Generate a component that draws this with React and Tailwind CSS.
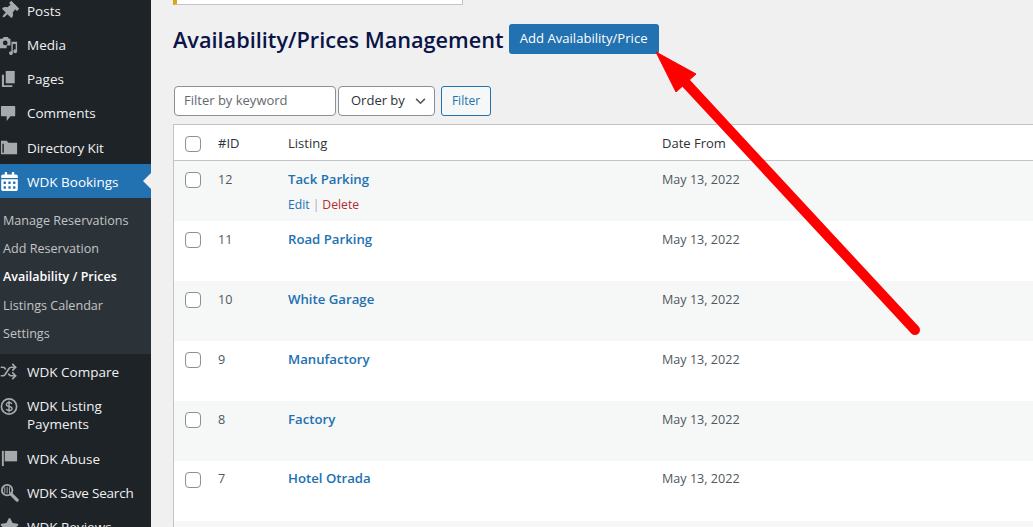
import React from "react";
import { Shuffle } from "lucide-react";
import { FaCalendarAlt, FaStar, FaThumbtack } from "react-icons/fa";

const Pin = () => <FaThumbtack className="w-[18px] h-[18px] rotate-45" />;
const Media = () => (
  <svg viewBox="0 0 20 20" className="w-[19px] h-[19px] fill-current">
    <path fillRule="evenodd" d="M0 3h2.500L4 1h4l1.500 2H11v7H7v3H0V3zm5.500 1.800a2.500 2.500 0 1 0 0 5 2.500 2.500 0 0 0 0-5z" />
    <path d="M12 6h6v10a2 2 0 1 1-1.500-1.900V8.500h-3V18a2 2 0 1 1-1.500-1.900V6z" />
  </svg>
);
const Pages = () => (
  <svg viewBox="0 0 20 20" className="w-[19px] h-[19px] fill-current">
    <path d="M6 1h9.500v13H6z" />
    <path d="M2 5h2.200v11H13v2H2z" />
  </svg>
);
const Comment = () => (
  <svg viewBox="0 0 20 20" className="w-[19px] h-[19px] fill-current">
    <path d="M2 2h13a1 1 0 0 1 1 1v9a1 1 0 0 1-1 1h-4l-4 5v-5H2a1 1 0 0 1-1-1V3a1 1 0 0 1 1-1z" />
  </svg>
);
const Folder = () => (
  <svg viewBox="0 0 20 20" className="w-[19px] h-[19px] fill-current mt-[1px]">
    <path d="M1 3h6l2 2h9v12H1zM2.500 6v9.500H4V6z" fillRule="evenodd" />
  </svg>
);
const Dollar = () => (
  <svg viewBox="0 0 20 20" className="w-[19px] h-[19px] -mt-[4px]">
    <circle cx="9.500" cy="10" r="8" fill="none" stroke="currentColor" strokeWidth="1.800" />
    <path d="M12.500 7.200c-.6-1-1.700-1.400-3-1.400-1.600 0-2.800.8-2.800 2.100 0 2.900 6 1.400 6 4.200 0 1.300-1.300 2.100-3 2.100-1.400 0-2.600-.5-3.200-1.600M9.500 4v12" fill="none" stroke="currentColor" strokeWidth="1.500" />
  </svg>
);
const Flag = () => (
  <svg viewBox="0 0 20 20" className="w-[19px] h-[19px] fill-current">
    <path d="M2 2h2v16H2z" />
    <path d="M5 2h13v11H5z" />
  </svg>
);
const SaveSearch = () => (
  <svg viewBox="0 0 20 20" className="w-[19px] h-[19px]">
    <circle cx="7.500" cy="7.500" r="5.500" fill="none" stroke="currentColor" strokeWidth="2" />
    <path d="M11.500 11.500 18 18" stroke="currentColor" strokeWidth="3.500" strokeLinecap="round" />
    <path d="M5 4.500v6M7.500 4v7M10 4.500v6" stroke="currentColor" strokeWidth="1" />
  </svg>
);

function Item({ icon, children, tall, shift }) {
  return (
    <div className={`flex text-[#f0f0f1] ${tall ? "pt-[9px] h-[53px]" : "items-center h-[34px]"}`}>
      <span className={`w-[27px] shrink-0 flex justify-start text-[#a7aaad] ${tall ? "pt-[4px]" : ""}`}>{icon}</span>
      <span className={`${tall ? "leading-[18px] w-[90px]" : ""} ${shift ? "pt-[2px]" : ""}`}>{children}</span>
    </div>
  );
}

const sub = [
  ["Manage Reservations", false],
  ["Add Reservation", false],
  ["Availability / Prices", true],
  ["Listings Calendar", false],
  ["Settings", false],
];

const rows = [
  ["12", "Tack Parking"],
  ["11", "Road Parking"],
  ["10", "White Garage"],
  ["9", "Manufactory"],
  ["8", "Factory"],
  ["7", "Hotel Otrada"],
];

function Check() {
  return <span className="block w-[16px] h-[16px] bg-white border border-[#8c8f94] rounded-[4px]" />;
}

export default function App() {
  return (
    <div className="relative flex h-[527px] w-full overflow-hidden bg-[#f0f0f1] text-[13px] font-['Open_Sans',sans-serif]">
      <aside className="w-[151px] shrink-0 bg-[#1d2327] text-[13.500px] overflow-hidden">
        <div className="-mt-[6px]">
          <Item icon={<Pin />}>Posts</Item>
          <Item icon={<Media />}>Media</Item>
          <Item icon={<Pages />}>Pages</Item>
          <Item icon={<Comment />}>Comments</Item>
          <Item shift icon={<Folder />}><span className="tracking-[-0.1px]">Directory Kit</span></Item>
        </div>
        <div className="relative flex items-center h-[34px] bg-[#2271b1] text-white">
          <span className="w-[27px] shrink-0 flex"><FaCalendarAlt className="w-[17px] h-[19px] ml-[1px]" /></span>
          <span className="pt-[2px]">WDK Bookings</span>
          <span className="absolute right-0 top-[9px] border-y-[8px] border-y-transparent border-r-[8px] border-r-[#f0f0f1]" />
        </div>
        <div className="bg-[#2c3338] h-[156px] pt-[9px] text-[12.600px] text-[#c3c4c7]">
          {sub.map(([t, active]) => (
            <div key={t} className={`h-[28.300px] flex items-center pl-[3px] ${active ? "text-white font-semibold text-[12.500px]" : ""}`}>{t}</div>
          ))}
        </div>
        <Item icon={<Shuffle className="w-[17px] h-[17px]" strokeWidth={2.400} />}><span className="relative top-[1px]">WDK Compare</span></Item>
        <Item tall icon={<Dollar />}>WDK Listing Payments</Item>
        <Item shift icon={<Flag />}>WDK Abuse</Item>
        <Item shift icon={<SaveSearch />}><span className="tracking-[-0.2px]">WDK Save Search</span></Item>
        <Item shift icon={<FaStar className="w-[19px] h-[19px]" />}>WDK Reviews</Item>
      </aside>

      <main className="flex-1 min-w-0 pl-[22px]">
        <div className="h-[5px] w-[290px] bg-white border-b border-r border-[#c3c4c7] border-l-[4px] border-l-[#dba617]" />
        <div className="flex items-start mt-[19px]">
          <h1 className="text-[21.700px] leading-[30px] font-semibold text-[#0a1446] mt-[1px]">Availability/Prices Management</h1>
          <button className="ml-[5px] h-[30px] w-[150px] rounded-[3px] bg-[#2271b1] text-white text-[13.100px] font-medium">Add Availability/Price</button>
        </div>
        <div className="flex items-center mt-[31px] ml-[1px] h-[30px]">
          <div className="w-[162px] h-[30px] px-[9px] flex items-center bg-white border border-[#8c8f94] rounded-[4px] text-[#646970]">Filter by keyword</div>
          <div className="ml-[2px] w-[97px] h-[30px] pl-[12px] pr-[8px] flex items-center justify-between bg-white border border-[#8c8f94] rounded-[4px] text-[#2c3338]">
            Order by
            <svg viewBox="0 0 12 8" className="w-[11px] h-[7px]" fill="none" stroke="#50575e" strokeWidth="1.800"><path d="M1 1l5 5 5-5" /></svg>
          </div>
          <button className="ml-[6px] w-[50px] h-[30px] rounded-[3px] border border-[#2271b1] bg-[#f6f7f7] text-[#2271b1] text-[12px]">Filter</button>
        </div>
        <div className="mt-[8px] border-t border-l border-[#c3c4c7] bg-white">
          <div className="grid grid-cols-[44px_70px_374px_1fr] h-[36px] pt-[2px] items-center border-b border-[#c3c4c7] text-[#2c3338]">
            <span className="pl-[11px]"><Check /></span>
            <span>#ID</span>
            <span>Listing</span>
            <span>Date From</span>
          </div>
          {rows.map(([id, name], i) => (
            <div key={id} className={`grid grid-cols-[44px_70px_374px_1fr] h-[60px] pt-[9px] ${i % 2 === 0 ? "bg-[#f6f7f7]" : "bg-white"} text-[#50575e] text-[12.600px]`}>
              <span className="pl-[11px] pt-[2px]"><Check /></span>
              <span className={`leading-[18px] ${i === 5 ? "" : "pt-[1px]"}`}>{id}</span>
              <div>
                <div className={`text-[13.200px] leading-[18px] font-[550] text-[#2271b1] ${i === 5 ? "-mt-[1px]" : ""}`}>{name}</div>
                {i === 0 && (
                  <div className="mt-[9px] leading-[16px] text-[12.200px]">
                    <span className="text-[#2271b1]">Edit</span>
                    <span className="text-[#a7aaad] mx-[3px]">|</span>
                    <span className="text-[#b32d2e]">Delete</span>
                  </div>
                )}
              </div>
              <span className={`leading-[18px] ${i === 5 ? "" : "pt-[1px]"}`}>May 13, 2022</span>
            </div>
          ))}
          <div className="h-[20px] bg-[#f6f7f7]" />
        </div>
      </main>

      <svg className="absolute left-0 top-0 pointer-events-none" width="1033" height="527">
        <path d="M656 52 696 74 676 92Z" fill="#fe0000" stroke="#fe0000" strokeWidth="1" strokeLinejoin="round" />
        <path d="M684 81 915 330" stroke="#fe0000" strokeWidth="10" strokeLinecap="round" />
      </svg>
    </div>
  );
}
